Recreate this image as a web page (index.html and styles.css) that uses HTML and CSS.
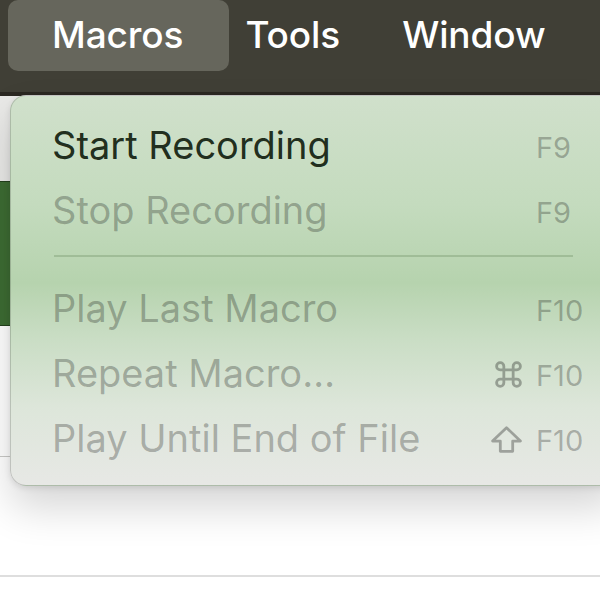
FILE: index.html
```html
<!DOCTYPE html>
<html lang="en">
<head>
<meta charset="utf-8">
<title>Macros menu</title>
<link rel="stylesheet" href="styles.css">
</head>
<body>
  <header class="menubar">
    <div class="menubar-item is-open">Macros</div>
    <div class="menubar-item item-tools">Tools</div>
    <div class="menubar-item item-window">Window</div>
  </header>
  <div class="band"></div>
  <main class="doc">
    <div class="doc-top"></div>
    <div class="doc-green"></div>
    <div class="doc-row"></div>
    <div class="doc-row doc-row-last"></div>
  </main>

  <div class="menu">
    <div class="item">
      <span class="label">Start Recording</span>
      <span class="mod"></span>
      <span class="key">F9</span>
    </div>
    <div class="item disabled">
      <span class="label">Stop Recording</span>
      <span class="mod"></span>
      <span class="key">F9</span>
    </div>
    <div class="separator"></div>
    <div class="item disabled">
      <span class="label">Play Last Macro</span>
      <span class="mod"></span>
      <span class="key">F10</span>
    </div>
    <div class="item disabled">
      <span class="label">Repeat Macro…</span>
      <span class="mod">
        <svg class="cmd" viewBox="0 0 28 28" width="29" height="29" aria-hidden="true">
          <path d="M9.5 9.5 H18.5 V18.5 H9.5 Z M9.5 9.5 V6 A3.5 3.5 0 1 0 6 9.5 H9.5 M18.5 9.5 V6 A3.5 3.5 0 1 1 22 9.5 H18.5 M18.5 18.5 V22 A3.5 3.5 0 1 0 22 18.5 H18.5 M9.5 18.5 V22 A3.5 3.5 0 1 1 6 18.5 H9.5" fill="none" stroke="currentColor" stroke-width="2.7" stroke-linejoin="round"/>
        </svg>
      </span>
      <span class="key">F10</span>
    </div>
    <div class="item disabled">
      <span class="label">Play Until End of File</span>
      <span class="mod">
        <svg class="shift" viewBox="0 0 32 28" width="33" height="29" aria-hidden="true">
          <path d="M16 2.5 L29.5 15.5 H22 V25.5 H10 V15.5 H2.5 Z" fill="none" stroke="currentColor" stroke-width="2.7" stroke-linejoin="round"/>
        </svg>
      </span>
      <span class="key">F10</span>
    </div>
  </div>
</body>
</html>
```

FILE: styles.css
```css
html, body {
  margin: 0;
  padding: 0;
}

body {
  width: 600px;
  height: 600px;
  overflow: hidden;
  position: relative;
  background: #ffffff;
  font-family: Inter, "Noto Sans", "Liberation Sans", sans-serif;
}

.menubar {
  height: 92px;
  background: #403f36;
  display: flex;
  align-items: flex-start;
  padding-left: 8px;
  box-sizing: border-box;
}

.menubar-item {
  color: #ffffff;
  font-size: 37px;
  font-weight: 500;
  height: 71px;
  line-height: 69px;
  border-radius: 10px;
  letter-spacing: -0.1px;
}

.menubar-item.is-open {
  background: #66665c;
  padding: 0 46px 0 44px;
}

.item-tools {
  padding-left: 16px;
}

.item-window {
  padding-left: 62px;
}

.band {
  height: 4px;
  background: #2b2822;
}

.doc-top {
  height: 85px;
  background: #e9e9e7;
}

.doc-green {
  height: 143px;
  background: #3d6c33;
  border-top: 1px solid #24411d;
  border-bottom: 1px solid #24411d;
}

.doc-row {
  height: 130px;
  border-bottom: 1px solid #c9c9c7;
  background: #ffffff;
}

.doc-row-last {
  border-bottom: 2px solid #dedede;
  height: 118px;
}

/* the dropdown menu lies over the document */
.menu {
  position: absolute;
  left: 10px;
  top: 95px;
  width: 610px;
  box-sizing: border-box;
  padding: 14px 0 17px 41px;
  border-radius: 16px;
  border: 1px solid rgba(0, 0, 0, 0.16);
  background: linear-gradient(to bottom,
    #d0e0cb 0%,
    #c4dbbe 28%,
    #b6d3ae 48%,
    #c9ddc4 62%,
    #dde6da 80%,
    #e7e8e5 100%);
  box-shadow: 0 22px 40px rgba(0, 0, 0, 0.16), 0 2px 6px rgba(0, 0, 0, 0.1);
}

.item {
  height: 65px;
  display: grid;
  grid-template-columns: 1fr auto 83px;
  align-items: center;
  column-gap: 13px;
  color: rgba(10, 22, 8, 0.9);
}

.label {
  font-size: 38px;
  letter-spacing: 0;
  line-height: 65px;
}

.key {
  font-size: 29px;
  color: rgba(0, 0, 0, 0.27);
  line-height: 65px;
  padding-top: 5px;
}

.mod {
  display: flex;
  align-items: center;
  justify-content: flex-end;
  color: rgba(0, 0, 0, 0.3);
  padding-top: 3px;
}

.item.disabled {
  color: rgba(0, 0, 0, 0.27);
}

.separator {
  height: 2px;
  margin: 15px 46px 16px 2px;
  background: rgba(40, 80, 30, 0.18);
}
```
